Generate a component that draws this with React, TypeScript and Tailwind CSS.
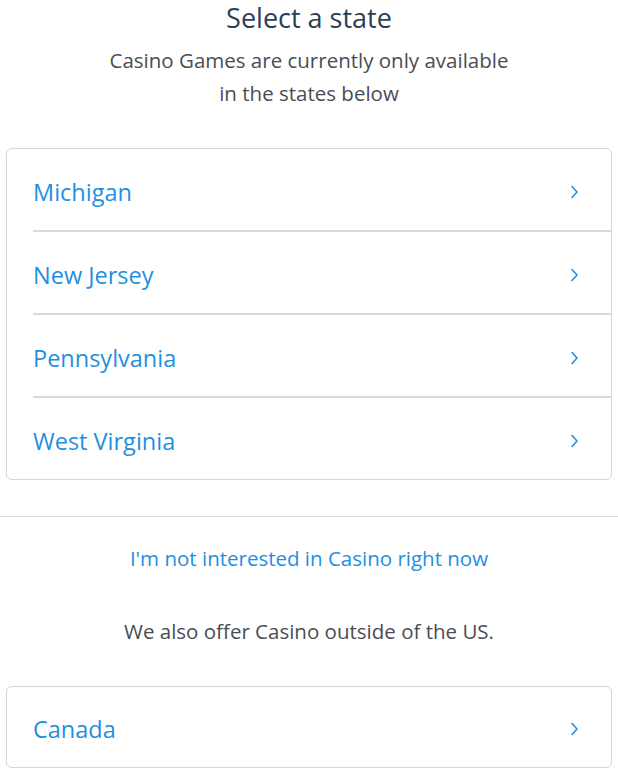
import React from "react";

const states = ["Michigan", "New Jersey", "Pennsylvania", "West Virginia"];

function Chevron() {
  return (
    <svg width="9" height="14" viewBox="0 0 9 14" fill="none" className="shrink-0">
      <path d="M2 1.5l5 5.5-5 5.5" stroke="#1f8fe0" strokeWidth="1.6" strokeLinecap="round" strokeLinejoin="round" />
    </svg>
  );
}

function Row({ label, h, divider }: { label: string; h: string; divider?: boolean }) {
  return (
    <button className="block w-full pl-[26px] text-left">
      <div
        className={`flex ${h} items-center justify-between pr-[32px] pt-[4px] ${
          divider ? "border-b-2 border-[#d5dcdd]" : ""
        }`}
      >
        <span className="text-[23.5px] leading-[30px] text-[#1f8fe0]">{label}</span>
        <Chevron />
      </div>
    </button>
  );
}

export default function App() {
  return (
    <div className="min-h-screen bg-white pt-[3px]" style={{ fontFamily: "'Open Sans', sans-serif" }}>
      <h1 className="text-center text-[27px] leading-[30px] text-[#2c3e56]">Select a state</h1>
      <p className="mt-[11px] text-center text-[20.5px] leading-[33px] text-[#4a4d52]">
        Casino Games are currently only available
        <br />
        in the states below
      </p>

      <div className="mx-[6px] mt-[38px] overflow-hidden rounded-md border border-[#d3d6d8]">
        {states.map((s, i) =>
          i === states.length - 1 ? (
            <Row key={s} label={s} h="h-[81px]" />
          ) : (
            <Row key={s} label={s} h="h-[83px]" divider />
          )
        )}
      </div>

      <div className="mt-[36px] border-t border-[#d8dadc]" />

      <p className="mt-[26px] text-center text-[20.5px] leading-[30px] text-[#1f8fe0]">
        I'm not interested in Casino right now
      </p>
      <p className="mt-[43px] text-center text-[20.5px] leading-[30px] text-[#4a4d52]">
        We also offer Casino outside of the US.
      </p>

      <div className="mx-[6px] mt-[40px] rounded-md border border-[#d3d6d8]">
        <Row label="Canada" h="h-[80px]" />
      </div>
    </div>
  );
}
